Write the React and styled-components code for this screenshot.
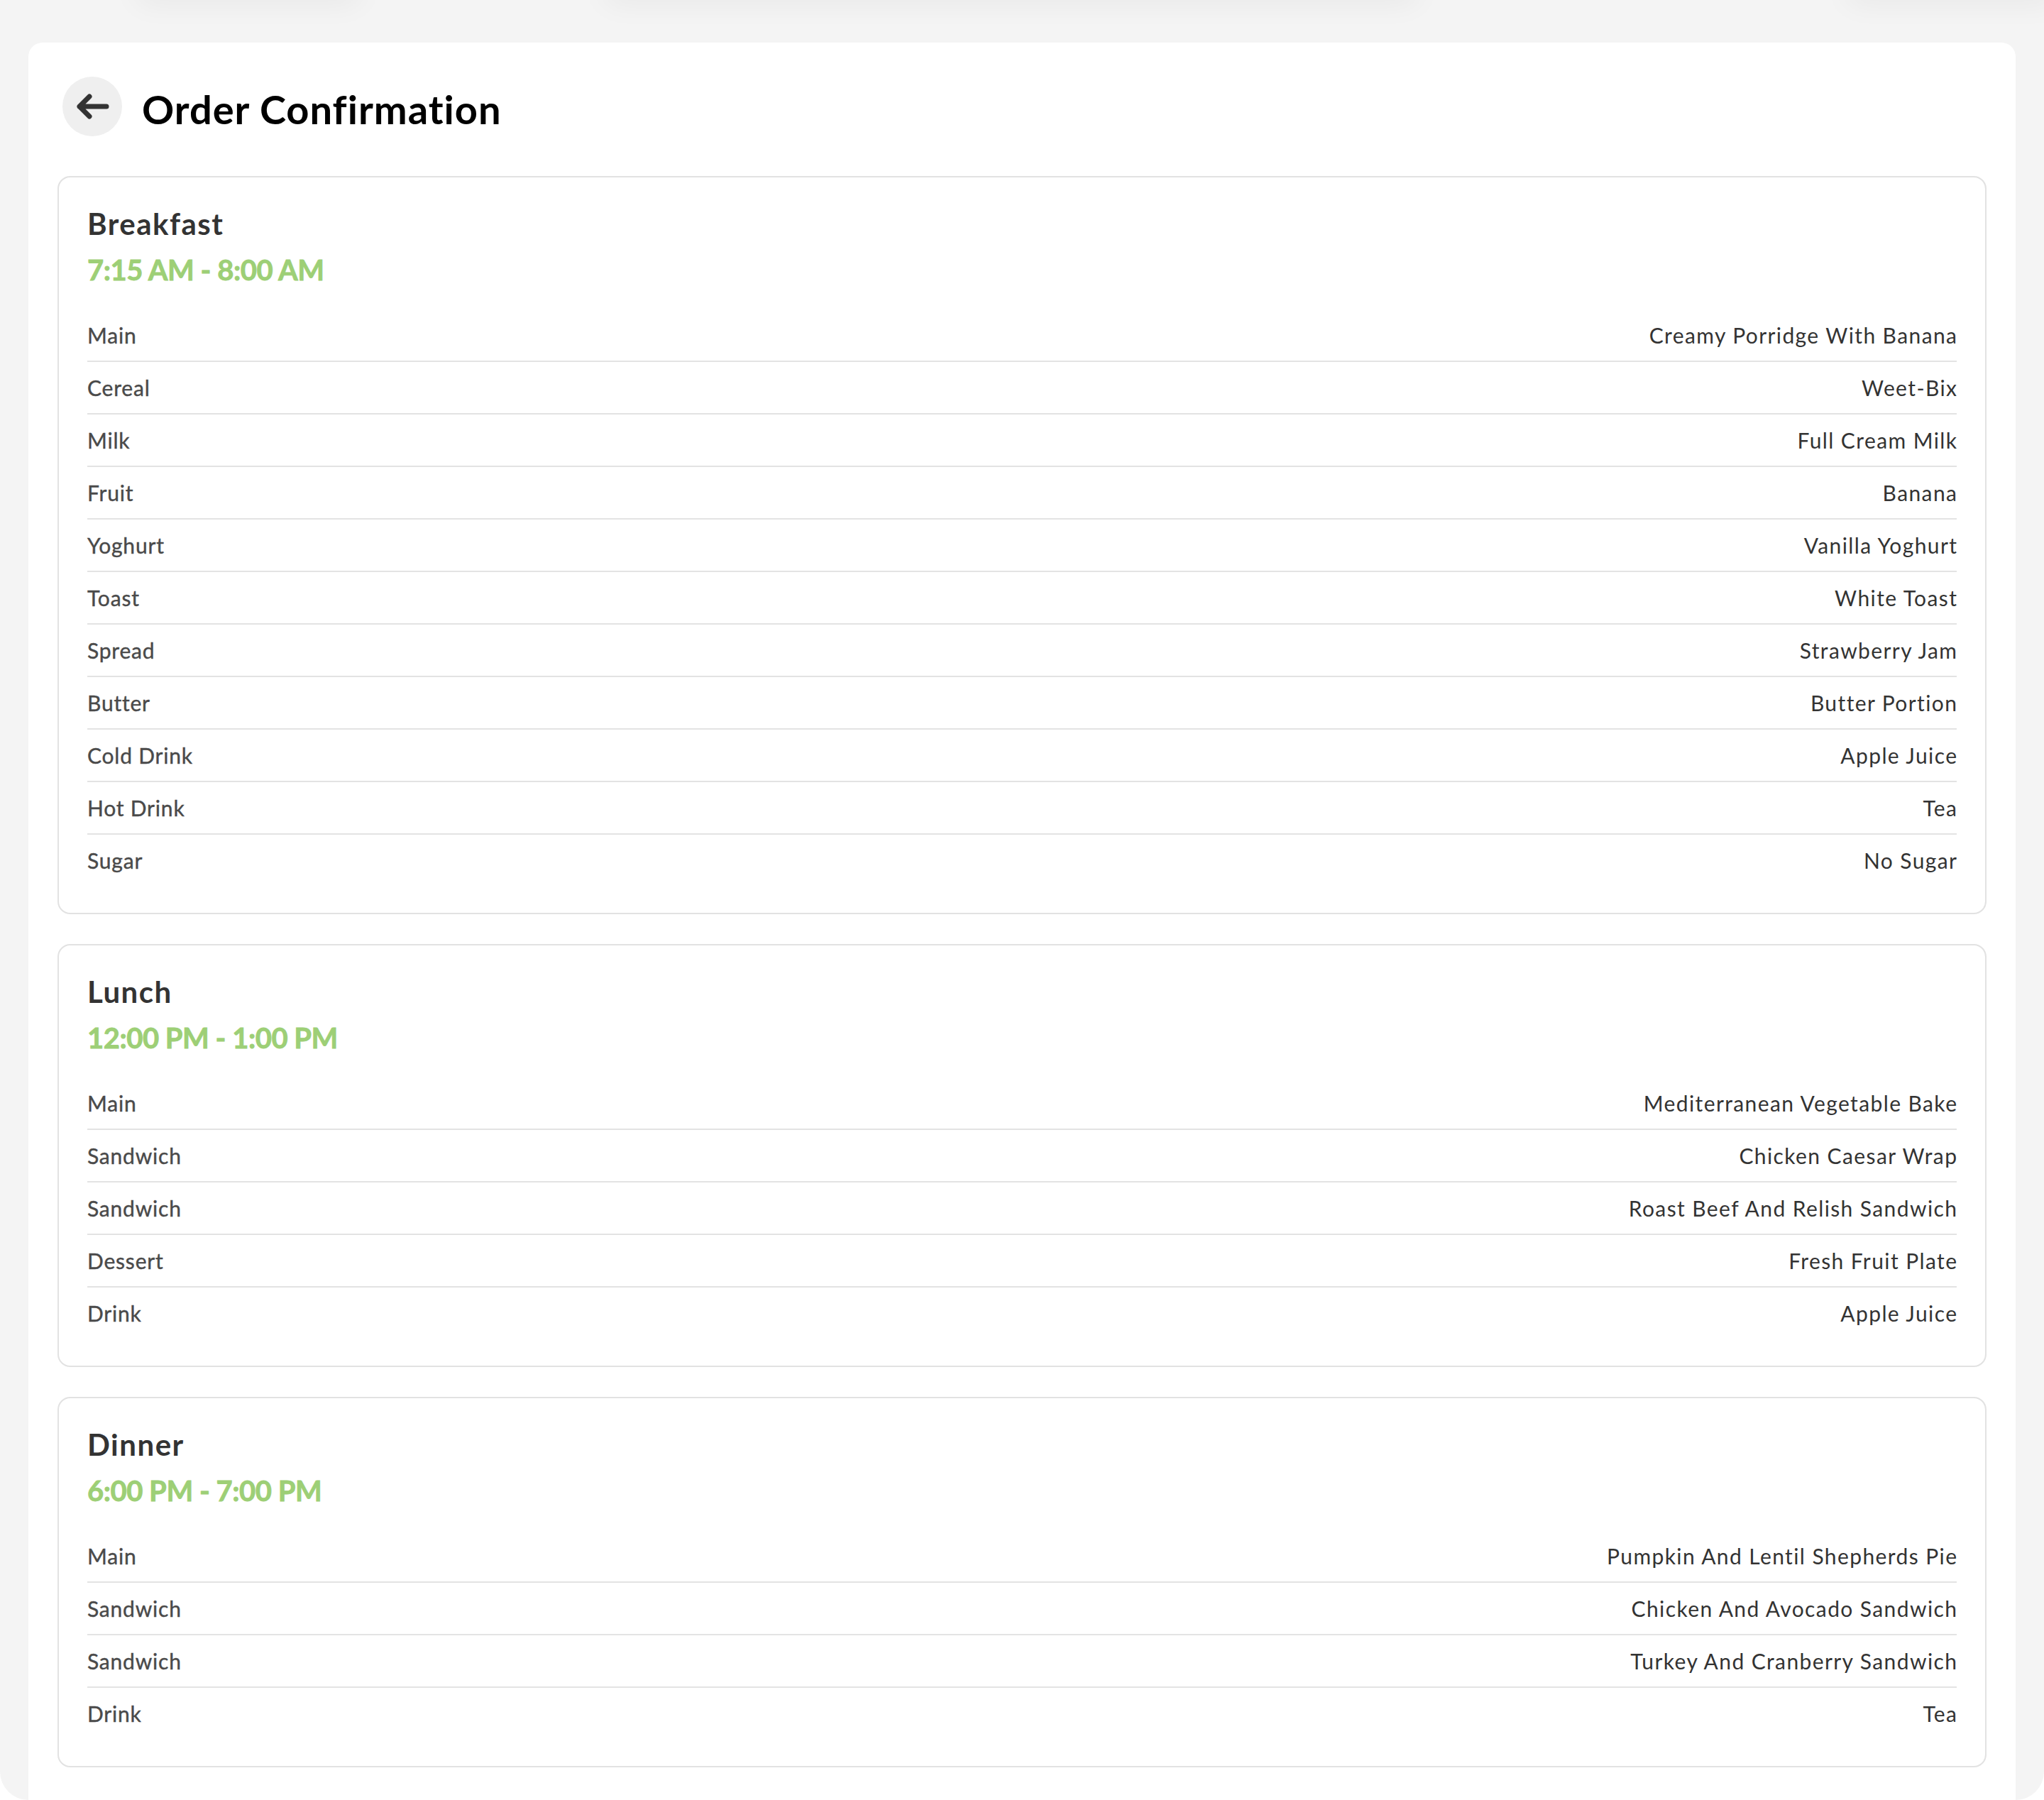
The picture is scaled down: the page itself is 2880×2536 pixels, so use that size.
import styled, { createGlobalStyle } from "styled-components";

const GlobalStyle = createGlobalStyle`
  html, body {
    margin: 0;
    padding: 0;
    background: #ffffff;
  }
  * {
    box-sizing: border-box;
  }
  body {
    font-family: "Lato", "Noto Sans", sans-serif;
  }
`;

const Frame = styled.div`
  height: 100vh;
  background: #f4f4f4;
  border-radius: 0 0 40px 40px;
  overflow: hidden;
  padding: 0 40px;
`;

const TopShadows = styled.div`
  display: flex;
  height: 60px;
  align-items: flex-start;
`;

const ShadowBlob = styled.div`
  flex: none;
  width: ${(p) => p.$w}px;
  margin-left: ${(p) => p.$ml}px;
  height: 40px;
  margin-top: -50px;
  border-radius: 30px;
  background: #f4f4f4;
  box-shadow: 0 16px 40px rgba(0, 0, 0, 0.05);
`;

const Sheet = styled.div`
  background: #ffffff;
  border-radius: 20px 20px 0 0;
  padding: 48px 41px 60px;
  min-height: 2600px;
`;

const Header = styled.div`
  display: flex;
  align-items: center;
  gap: 28px;
  padding: 0 7px;
  margin-bottom: 56px;
`;

const BackButton = styled.button`
  width: 84px;
  height: 84px;
  border-radius: 50%;
  border: none;
  background: #efefef;
  display: flex;
  align-items: center;
  justify-content: center;
  padding: 0;
  cursor: pointer;
`;

const Title = styled.h1`
  margin: 0;
  padding-top: 6px;
  font-size: 56px;
  font-weight: 700;
  color: #000000;
  letter-spacing: 1px;
`;

const MealList = styled.div`
  display: flex;
  flex-direction: column;
  gap: 42px;
`;

const MealCard = styled.section`
  border: 2px solid #e2e2e2;
  border-radius: 18px;
  padding: 40px 40px 38px;
`;

const MealName = styled.h2`
  margin: 0;
  font-size: 42px;
  line-height: 50px;
  font-weight: 700;
  color: #333333;
  letter-spacing: 1.5px;
`;

const MealTime = styled.div`
  margin-top: 16px;
  font-size: 40px;
  line-height: 48px;
  font-weight: 700;
  color: #9dcf76;
  letter-spacing: -0.5px;
  -webkit-text-stroke: 0.8px #9dcf76;
`;

const Items = styled.div`
  margin-top: 32px;
  display: flex;
  flex-direction: column;
`;

const ItemRow = styled.div`
  display: flex;
  justify-content: space-between;
  align-items: center;
  padding: 14px 0;
  font-size: 30px;
  line-height: 44px;
  border-bottom: 2px solid #e3e3e3;

  &:last-child {
    border-bottom: none;
  }
`;

const ItemLabel = styled.span`
  color: #4a4a4a;
  letter-spacing: 0.8px;
  -webkit-text-stroke: 0.4px #4a4a4a;
`;

const ItemValue = styled.span`
  color: #333333;
  text-align: right;
  letter-spacing: 1.4px;
  margin-right: -1.4px;
`;

const meals = [
  {
    name: "Breakfast",
    time: "7:15 AM - 8:00 AM",
    items: [
      ["Main", "Creamy Porridge With Banana"],
      ["Cereal", "Weet-Bix"],
      ["Milk", "Full Cream Milk"],
      ["Fruit", "Banana"],
      ["Yoghurt", "Vanilla Yoghurt"],
      ["Toast", "White Toast"],
      ["Spread", "Strawberry Jam"],
      ["Butter", "Butter Portion"],
      ["Cold Drink", "Apple Juice"],
      ["Hot Drink", "Tea"],
      ["Sugar", "No Sugar"],
    ],
  },
  {
    name: "Lunch",
    time: "12:00 PM - 1:00 PM",
    items: [
      ["Main", "Mediterranean Vegetable Bake"],
      ["Sandwich", "Chicken Caesar Wrap"],
      ["Sandwich", "Roast Beef And Relish Sandwich"],
      ["Dessert", "Fresh Fruit Plate"],
      ["Drink", "Apple Juice"],
    ],
  },
  {
    name: "Dinner",
    time: "6:00 PM - 7:00 PM",
    items: [
      ["Main", "Pumpkin And Lentil Shepherds Pie"],
      ["Sandwich", "Chicken And Avocado Sandwich"],
      ["Sandwich", "Turkey And Cranberry Sandwich"],
      ["Drink", "Tea"],
    ],
  },
];

function ArrowLeft() {
  return (
    <svg width="48" height="40" viewBox="0 0 48 40" fill="none">
      <path
        d="M44 20H6M20 6L6 20l14 14"
        stroke="#333333"
        strokeWidth="7"
        strokeLinecap="round"
        strokeLinejoin="round"
      />
    </svg>
  );
}

export default function App() {
  return (
    <>
      <GlobalStyle />
      <Frame>
        <TopShadows>
          <ShadowBlob $w={320} $ml={150} />
          <ShadowBlob $w={1150} $ml={340} />
          <ShadowBlob $w={300} $ml={600} />
        </TopShadows>
        <Sheet>
          <Header>
            <BackButton aria-label="Back">
              <ArrowLeft />
            </BackButton>
            <Title>Order Confirmation</Title>
          </Header>
          <MealList>
            {meals.map((meal) => (
              <MealCard key={meal.name}>
                <MealName>{meal.name}</MealName>
                <MealTime>{meal.time}</MealTime>
                <Items>
                  {meal.items.map(([label, value], i) => (
                    <ItemRow key={i}>
                      <ItemLabel>{label}</ItemLabel>
                      <ItemValue>{value}</ItemValue>
                    </ItemRow>
                  ))}
                </Items>
              </MealCard>
            ))}
          </MealList>
        </Sheet>
      </Frame>
    </>
  );
}
